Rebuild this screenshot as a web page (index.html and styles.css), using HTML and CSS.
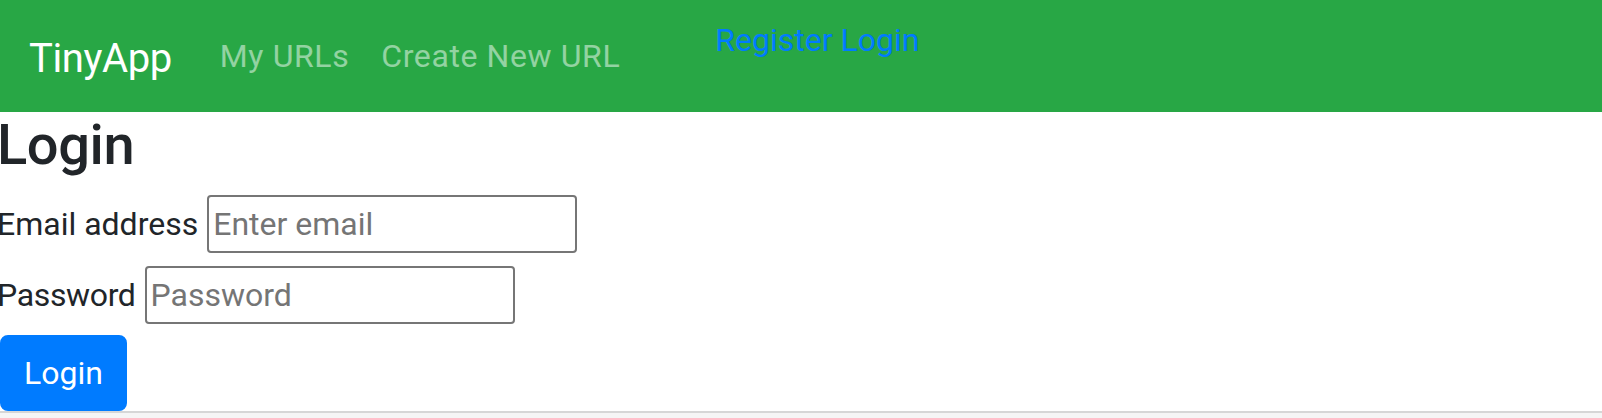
FILE: index.html
```html
<!DOCTYPE html>
<html lang="en">
<head>
<meta charset="utf-8">
<title>TinyApp - Login</title>
<link rel="stylesheet" href="styles.css">
</head>
<body>
<nav class="navbar">
  <a class="brand" href="#">TinyApp</a>
  <ul class="nav">
    <li><a class="nav-link" href="#">My URLs</a></li>
    <li><a class="nav-link" href="#">Create New URL</a></li>
  </ul>
  <div class="auth"><a class="auth-link" href="#">Register</a> <a class="auth-link" href="#">Login</a></div>
</nav>
<main class="page">
  <h1 class="title">Login</h1>
  <form class="login-form">
    <div class="field field-email">
      <label class="field-label" for="email">Email address</label>
      <input class="field-input" id="email" type="email" placeholder="Enter email">
    </div>
    <div class="field field-password">
      <label class="field-label field-label-tight" for="password">Password</label>
      <input class="field-input" id="password" type="password" placeholder="Password">
    </div>
    <button class="btn" type="submit">Login</button>
  </form>
</main>
</body>
</html>
```
FILE: styles.css
```css
html {
  background: #f5f5f5;
}
body {
  margin: 0;
  font-family: Roboto, "Liberation Sans", Arial, sans-serif;
  font-size: 32px;
  line-height: 48px;
  color: #212529;
}
.navbar {
  display: flex;
  align-items: center;
  height: 112px;
  padding: 0 32px 0 29px;
  box-sizing: border-box;
  background: #28a745;
}
.brand {
  font-size: 40px;
  line-height: 60px;
  letter-spacing: -0.4px;
  color: #fff;
  text-decoration: none;
  margin-right: 32px;
  padding-top: 6px;
}
.nav {
  display: flex;
  list-style: none;
  margin: 0;
  padding: 0;
}
.nav-link {
  display: block;
  padding: 16px;
  letter-spacing: 0.6px;
  color: rgba(255, 255, 255, 0.5);
  text-decoration: none;
}
.auth {
  align-self: flex-start;
  margin-top: 16px;
  margin-left: 79px;
}
.auth-link {
  color: #007bff;
  text-decoration: none;
}
.page {
  background: #fff;
  border-bottom: 2px solid #d6d6d6;
}
.title {
  margin: 0 0 16px -3px;
  font-size: 56px;
  line-height: 67px;
  letter-spacing: -0.4px;
  font-weight: 500;
}
.login-form {
  display: flex;
  flex-direction: column;
  align-items: flex-start;
}
.field {
  display: flex;
  align-items: center;
  gap: 9px;
}
.field-label {
  margin-left: -3px;
}
.field-label-tight {
  letter-spacing: -0.35px;
}
.field-password {
  margin-top: 13px;
}
.field-input {
  box-sizing: border-box;
  width: 370px;
  height: 58px;
  padding: 0 4px;
  border: 2px solid #767676;
  border-radius: 4px;
  font-family: inherit;
  font-size: 32px;
  color: #212529;
}
.field-input::placeholder {
  color: #757575;
}
.btn {
  margin-top: 11px;
  height: 76px;
  padding: 12px 22px;
  border: 2px solid #007bff;
  border-radius: 8px;
  background: #007bff;
  color: #fff;
  font-family: inherit;
  font-size: 32px;
  line-height: 48px;
}
```
